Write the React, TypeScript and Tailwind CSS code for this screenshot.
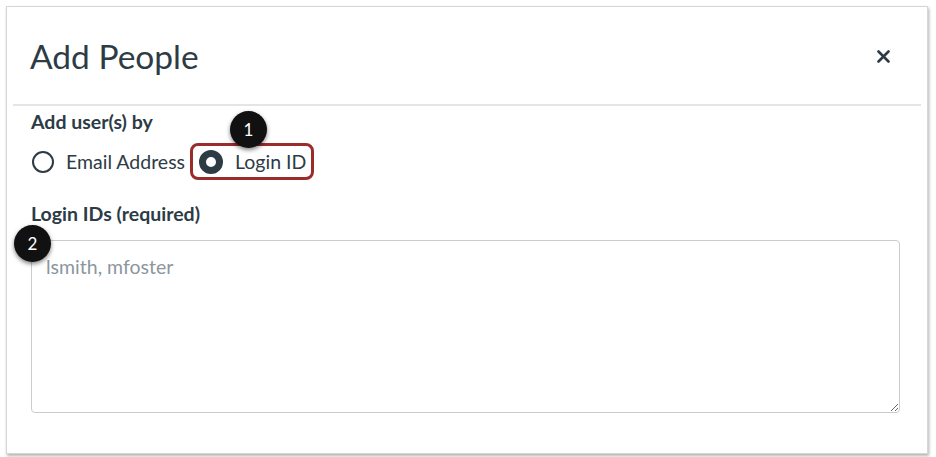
import React from "react";

export default function App() {
  return (
    <div
      className="relative w-[936px] h-[457px] bg-white p-[6px]"
      style={{ fontFamily: "Lato, 'Noto Sans', sans-serif" }}
    >
      <div className="w-[922px] h-[448px] border border-[#d6d6d6] bg-white shadow-[1px_2px_3px_rgba(0,0,0,0.3)]">
        <div className="mx-[6px] h-[99px] border-b-2 border-[#e3e6e8] flex items-center justify-between pl-[17px] pr-[31px]">
          <h1 className="text-[33.5px] leading-none text-[#2d3b45] font-normal pt-[2px]">Add People</h1>
          <svg width="13" height="13" viewBox="0 0 13 13" className="mt-[1px]">
            <path d="M1.5 1.5 L11.5 11.5 M11.5 1.5 L1.5 11.5" stroke="#2d3b45" strokeWidth="2.6" strokeLinecap="round" />
          </svg>
        </div>
        <div className="pl-[24px] pt-[5px]">
          <div className="text-[19.5px] leading-[22px] font-bold text-[#2d3b45]">Add user(s) by</div>
          <div className="mt-[10px] h-[37px] flex items-center">
            <span className="ml-[1px] w-[22px] h-[22px] rounded-full border-2 border-[#2d3b45] box-border" />
            <span className="ml-[12px] text-[19.5px] leading-[22px] text-[#2d3b45]">Email Address</span>
            <div className="ml-[5px] h-[37px] border-[3px] border-[#9b2c2c] rounded-[8px] flex items-center pl-[6px] pr-[5px]">
              <span className="w-[24px] h-[24px] rounded-full border-[7px] border-[#2d3b45] bg-white box-border" />
              <span className="ml-[12px] text-[19.5px] leading-[22px] text-[#2d3b45]">Login ID</span>
            </div>
          </div>
          <div className="mt-[23px] text-[19.5px] leading-[22px] font-bold text-[#2d3b45]">Login IDs (required)</div>
          <textarea
            className="mt-[15px] block w-[869px] h-[173px] border border-[#c7cdd1] rounded-[4px] px-[14px] pt-[15px] text-[19.5px] leading-[22px] text-[#2d3b45] placeholder:text-[#8b969e] outline-none"
            placeholder="lsmith, mfoster"
          />
        </div>
      </div>
      <div className="absolute left-[230px] top-[111px] w-[37px] h-[37px] rounded-full bg-[#111] text-white flex items-center justify-center text-[17px] shadow-[0_2px_4px_rgba(0,0,0,0.5)]">
        1
      </div>
      <div className="absolute left-[14px] top-[225px] w-[37px] h-[37px] rounded-full bg-[#111] text-white flex items-center justify-center text-[17px] shadow-[0_2px_4px_rgba(0,0,0,0.5)]">
        2
      </div>
    </div>
  );
}
